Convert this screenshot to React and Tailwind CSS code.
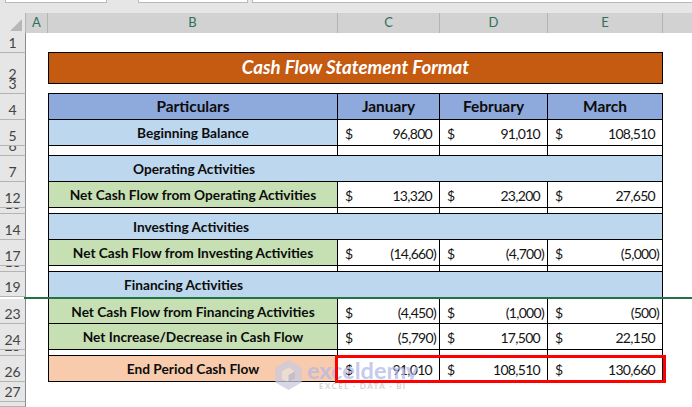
const rowBase = "grid grid-cols-[26px_22px_290px_102px_108px_115px_1fr]";
const font = { fontFamily: "Lato, 'Open Sans', sans-serif" };

function RowHead({ n }) {
  return (
    <div className="flex items-end justify-center overflow-hidden bg-[#e6e6e6] border-r border-r-[#8c8c8c] border-b border-b-[#b4b4b4] text-[14px] leading-[18px] text-[#444444]">
      {n}
    </div>
  );
}

function Row({ n, h, children }) {
  return (
    <div className={`${rowBase} ${h}`}>
      <RowHead n={n} />
      <div />
      {children}
    </div>
  );
}

function Label({ text, bg }) {
  return (
    <div className={`flex items-center justify-center border-x border-b border-black pt-[2px] font-bold text-[13.7px] text-[#0c0c0c] ${bg}`}>
      {text}
    </div>
  );
}

function Num({ value }) {
  const neg = value.startsWith("(");
  return (
    <div className={`flex items-center justify-between border-r border-b border-black pl-[7px] pt-[2px] text-[14px] tracking-[-0.7px] text-[#141414] ${neg ? "pr-[3px]" : "pr-[7px]"}`}>
      <span>$</span>
      <span>{value}</span>
    </div>
  );
}

function Blank() {
  return <div className="border-r border-b border-black bg-white" />;
}

function Spacer({ n, h }) {
  return (
    <Row n={n} h={h}>
      <div className="border-x border-b border-black" />
      <Blank />
      <Blank />
      <Blank />
    </Row>
  );
}

function Section({ n, h, text, pad, noBottom }) {
  return (
    <Row n={n} h={h}>
      <div className={`col-span-4 flex items-center bg-[#bdd7ee] border-x border-black pt-[1px] font-bold text-[13.7px] text-[#0c0c0c] ${pad} ${noBottom ? "" : "border-b"}`}>
        {text}
      </div>
    </Row>
  );
}

function Data({ n, h, text, bg, values }) {
  return (
    <Row n={n} h={h}>
      <Label text={text} bg={bg} />
      {values.map((v, i) => (
        <Num key={i} value={v} />
      ))}
    </Row>
  );
}

function ColHead({ label, last }) {
  return (
    <div className={`flex items-center justify-center bg-[#d2d2d2] text-[13px] text-[#2f6f5c] ${last ? "" : "border-r border-r-[#b4b4b4]"}`}>
      {label}
    </div>
  );
}

function Watermark() {
  return (
    <div className="absolute left-[275px] top-[360px] flex items-start gap-[5px] opacity-75 pointer-events-none">
      <svg width="27" height="30" viewBox="0 0 28 32">
        <path d="M14 0 L28 8 L28 24 L14 32 L0 24 L0 8 Z" fill="#c9cbe0" />
        <path d="M14 8 L21 12 L21 20 L14 24 L7 20 L7 12 Z" fill="#e9e3df" />
        <path d="M14 16 L21 12 L21 20 L14 24 Z" fill="#b7b9d6" />
      </svg>
      <div className="flex flex-col items-start">
        <span className="text-[23.5px] leading-[20px] font-bold text-[#b4b9e6]">exceldemy</span>
        <span className="mt-[1px] ml-[12px] text-[8px] leading-[10px] font-bold tracking-[1.4px] text-[#c4c4c4] whitespace-nowrap">EXCEL · DATA · BI</span>
      </div>
    </div>
  );
}

export default function App() {
  return (
    <div className="relative h-[407px] w-[692px] overflow-hidden bg-white" style={font}>
      <div className="flex h-[13px] items-start gap-[4px] bg-[#e6e6e6]">
        <div className="ml-[5px] h-[3px] w-[102px] border-x border-b border-[#b9b9b9] bg-white" />
        <div className="ml-[27px] h-[3px] w-[110px] border-x border-b border-[#b9b9b9] bg-white" />
        <div className="h-[3px] flex-1 border-l border-b border-[#b9b9b9] bg-white" />
      </div>

      <div className={`${rowBase} h-[18px]`}>
        <div className="flex items-end justify-end bg-[#e6e6e6] border-r border-r-[#b4b4b4] pr-[3px] pb-[2px]">
          <svg width="12" height="12" viewBox="0 0 12 12">
            <path d="M12 0 L12 12 L0 12 Z" fill="#b8b8b8" />
          </svg>
        </div>
        <ColHead label="A" />
        <ColHead label="B" />
        <ColHead label="C" />
        <ColHead label="D" />
        <ColHead label="E" />
        <ColHead label="" last />
      </div>
      <div className="ml-[25px] h-[2px] bg-[#217346]" />

      <Row n="1" h="h-[20px]"><div className="col-span-4" /></Row>
      <Row n="2" h="h-[26px]">
        <div className="col-span-4 flex items-center justify-center bg-[#c55a11] border-x border-b border-black pb-[2px] shadow-[0_-1px_0_#000000] font-bold italic text-[18.7px] text-white">
          Cash Flow Statement Format
        </div>
      </Row>
      <Row n="3" h="h-[15px]"><div className="col-span-4" /></Row>

      <Row n="4" h="h-[26px]">
        {["Particulars", "January", "February", "March"].map((t, i) => (
          <div
            key={t}
            className={`flex items-center justify-center bg-[#8ea9db] border-r border-b border-black pt-[1px] shadow-[0_-1px_0_#000000] font-bold text-[15.4px] text-[#0c0c0c] ${i === 0 ? "border-l" : ""}`}
          >
            {t}
          </div>
        ))}
      </Row>
      <Data n="5" h="h-[26px]" text="Beginning Balance" bg="bg-[#bdd7ee]" values={["96,800", "91,010", "108,510"]} />
      <Spacer n="6" h="h-[10px]" />
      <Section n="7" h="h-[26px]" text="Operating Activities" pad="pl-[84px]" />
      <Data n="12" h="h-[26px]" text="Net Cash Flow from Operating Activities" bg="bg-[#c6e0b4]" values={["13,320", "23,200", "27,650"]} />
      <Spacer n="13" h="h-[6px]" />
      <Section n="14" h="h-[26px]" text="Investing Activities" pad="pl-[84px]" />
      <Data n="17" h="h-[26px]" text="Net Cash Flow from Investing Activities" bg="bg-[#c6e0b4]" values={["(14,660)", "(4,700)", "(5,000)"]} />
      <Spacer n="18" h="h-[6px]" />
      <Section n="19" h="h-[25px]" text="Financing Activities" pad="pl-[75px]" noBottom />

      <div className="ml-[24px] h-[2px] bg-[#217346]" />

      <Data n="23" h="h-[25px]" text="Net Cash Flow from Financing Activities" bg="bg-[#c6e0b4]" values={["(4,450)", "(1,000)", "(500)"]} />
      <Data n="24" h="h-[26px]" text="Net Increase/Decrease in Cash Flow" bg="bg-[#c6e0b4]" values={["(5,790)", "17,500", "22,150"]} />
      <Spacer n="25" h="h-[6px]" />
      <Data n="26" h="h-[26px]" text="End Period Cash Flow" bg="bg-[#f8cbad]" values={["91,010", "108,510", "130,660"]} />
      <Row n="27" h="h-[20px]"><div className="col-span-4" /></Row>
      <Row n="" h="h-[5px]"><div className="col-span-4" /></Row>

      <Watermark />
      <div className="absolute left-[335px] top-[355px] h-[28px] w-[331px] border-[3px] border-[#ff0000]" />
    </div>
  );
}
